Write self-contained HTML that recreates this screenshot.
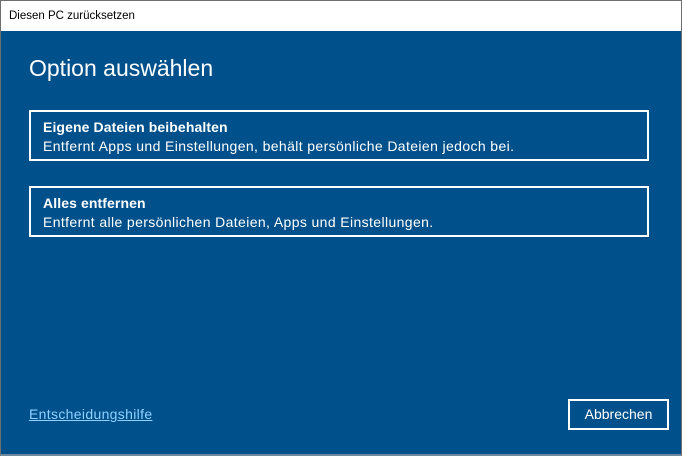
<!DOCTYPE html><html><head><meta charset="utf-8"><style>
*{margin:0;padding:0;box-sizing:border-box}
body{width:682px;height:456px;overflow:hidden;background:#00508b;font-family:"Liberation Sans",sans-serif;position:relative}
.win{position:absolute;left:0;top:0;width:682px;height:456px;border:1px solid #6f6f6f;border-bottom:2px solid #6f8a9f}
.tb{position:absolute;left:1px;top:1px;right:1px;height:30px;background:#fff;color:#000;font-size:11.5px;padding:9px 0 0 8px}
h1{position:absolute;left:29px;top:55px;font-weight:normal;color:#fff;font-size:23px}
.box{position:absolute;left:29px;width:620px;height:51px;border:2px solid #fff;color:#fff;padding:6px 0 0 12px;font-size:14px;line-height:19px;letter-spacing:0.38px}
.box b{display:block;letter-spacing:0.1px}
.link{position:absolute;left:29px;top:406px;color:#8fd0ff;text-decoration:underline;font-size:14px;letter-spacing:0.33px}
.btn{position:absolute;left:568px;top:399px;width:101px;height:31px;border:2px solid #fff;color:#fff;font-size:14px;text-align:center;line-height:27px}
</style></head><body><div class="win"></div>
<div class="tb">Diesen PC zurücksetzen</div>
<h1>Option auswählen</h1>
<div class="box" style="top:110px"><b>Eigene Dateien beibehalten</b>Entfernt Apps und Einstellungen, behält persönliche Dateien jedoch bei.</div>
<div class="box" style="top:186px"><b>Alles entfernen</b>Entfernt alle persönlichen Dateien, Apps und Einstellungen.</div>
<div class="link">Entscheidungshilfe</div>
<div class="btn">Abbrechen</div>
</body></html>
